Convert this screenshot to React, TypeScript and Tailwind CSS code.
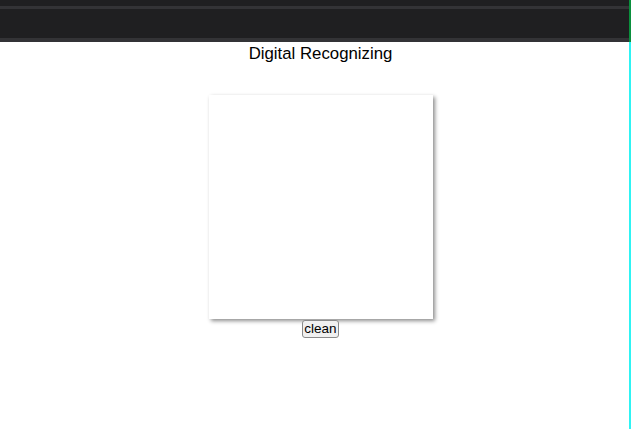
import React from "react";

export default function App() {
  return (
    <div className="flex h-[429px] w-[631px] overflow-hidden bg-white font-['Liberation_Sans',Arial,sans-serif]">
      <div className="flex flex-1 flex-col">
        <div className="flex h-[42px] flex-col bg-[#1f1f21]">
          <div className="h-[6px]" />
          <div className="h-[3px] bg-[#333336]" />
          <div className="flex-1" />
          <div className="h-[4px] bg-[#333336]" />
        </div>
        <div className="flex flex-col items-center pl-[12px]">
          <h1 className="mt-[2px] text-[16.8px] leading-[20px] text-black">Digital Recognizing</h1>
          <canvas
            width={224}
            height={224}
            className="mt-[31px] h-[224px] w-[224px] bg-white shadow-[2px_2px_4px_rgba(0,0,0,0.45)]"
          />
          <button className="mt-px h-[18px] rounded-[3px] border border-[#8a8a8a] bg-[#f0f0f0] px-px text-[13.5px] leading-[14px] text-black">
            clean
          </button>
        </div>
      </div>
      <div className="flex w-[2px] flex-col">
        <div className="h-[42px] bg-[#0a8f3c]" />
        <div className="flex-1 bg-[#2ef4f4]" />
      </div>
    </div>
  );
}
